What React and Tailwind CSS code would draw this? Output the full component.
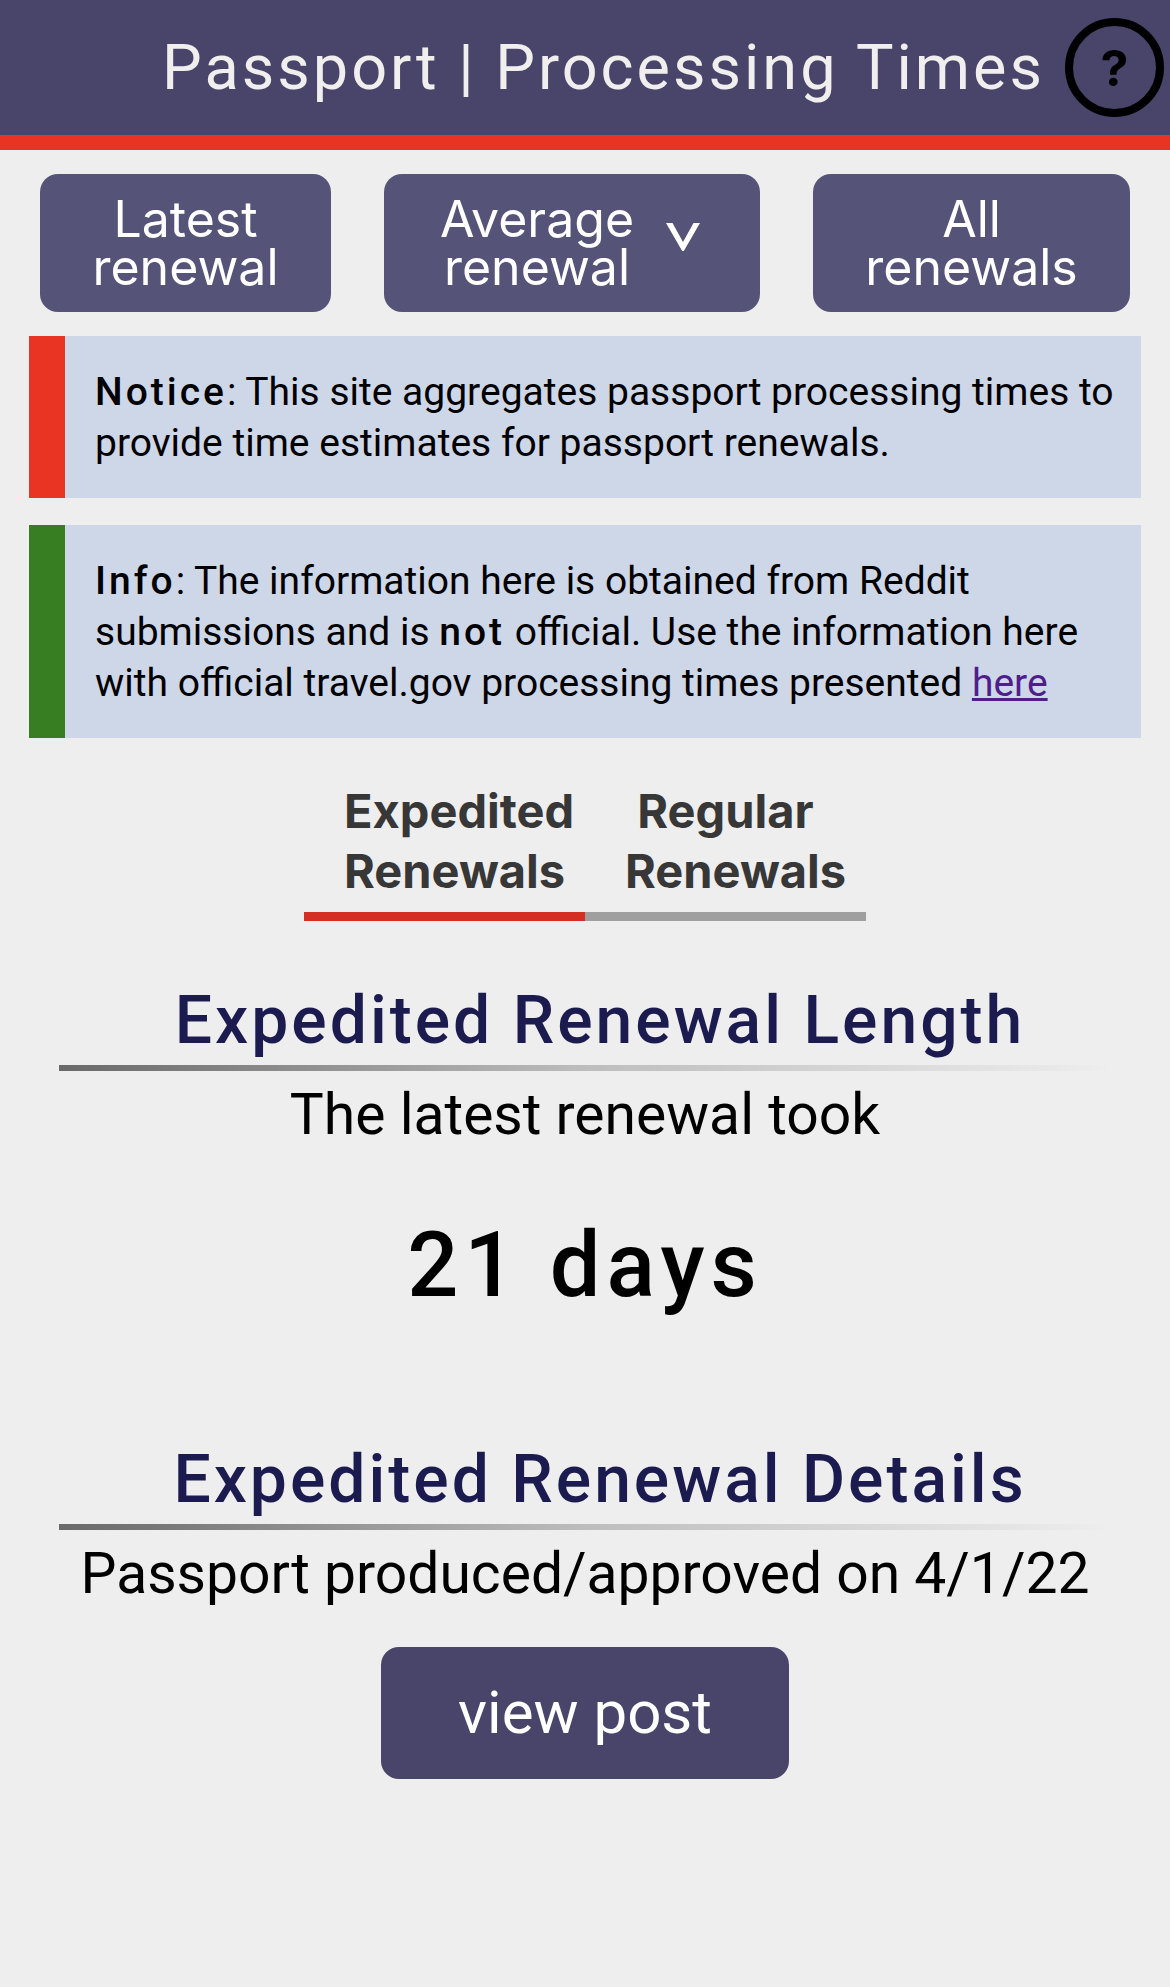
function NavButton({ children }) {
  return (
    <button
      type="button"
      className="flex h-[138px] items-center justify-center gap-8 rounded-[18px] bg-[#565378] font-['Inter',sans-serif] text-[50px] leading-[48px] text-white"
    >
      {children}
    </button>
  );
}

function Notice({ accent, children }) {
  return (
    <p className={`border-l-[36px] bg-[#ced7e8] pt-[31px] pr-4 pb-[29px] pl-[30px] text-[39px] leading-[51px] ${accent}`}>
      {children}
    </p>
  );
}

function Strong({ children }) {
  return <strong className="font-medium tracking-[3px]">{children}</strong>;
}

function Tab({ selected, children }) {
  return (
    <button
      type="button"
      role="tab"
      aria-selected={selected}
      className={`w-[281px] border-b-9 px-10 pt-3 pb-[11px] text-center font-['Inter',sans-serif] text-[47px] leading-[60px] font-bold text-[#373737] ${
        selected ? "border-[#d32f22]" : "border-[#9f9f9f]"
      }`}
    >
      {children}
    </button>
  );
}

function SectionHeading({ children }) {
  return (
    <>
      <h2 className="pl-[30px] text-center text-[66px] leading-[88px] font-medium tracking-[3px] text-[#1c1b4f]">
        {children}
      </h2>
      <div className="h-[6px] bg-linear-to-r from-[#696969] via-[#bdbdbd] to-[#eeeeee]" />
    </>
  );
}

export default function App() {
  return (
    <div className="min-h-screen bg-[#eeeeee] font-['Roboto',sans-serif] text-black">
      <header className="flex h-[150px] items-center justify-end gap-5 border-b-15 border-[#e93323] bg-[#48446a] pr-[6px]">
        <h1 className="text-[63px] leading-[80px] font-normal tracking-[3px] whitespace-nowrap text-[#f1eeee]">
          Passport | Processing Times
        </h1>
        <button
          type="button"
          aria-label="Help"
          className="flex size-[99px] shrink-0 items-center justify-center rounded-full border-8 border-black font-['Inter',sans-serif] text-[50px] leading-[60px] font-bold"
        >
          ?
        </button>
      </header>

      <nav className="grid grid-cols-[291fr_376fr_317fr] gap-[53px] px-10 pt-6">
        <NavButton>
          <span>
            Latest
            <br />
            renewal
          </span>
        </NavButton>
        <NavButton>
          <span>
            Average
            <br />
            renewal
          </span>
          <svg viewBox="0 0 34 28" className="mr-1 mb-3 h-[28px] w-[34px] shrink-0" fill="currentColor" aria-hidden="true">
            <path d="M0 0h6.500L17 19 27.500 0H34L17.800 28h-1.600z" />
          </svg>
        </NavButton>
        <NavButton>
          <span>
            All
            <br />
            renewals
          </span>
        </NavButton>
      </nav>

      <section className="flex flex-col gap-[27px] px-[29px] pt-6">
        <Notice accent="border-[#e93323]">
          <Strong>Notice</Strong>: This site aggregates passport processing times to provide time estimates for
          passport renewals.
        </Notice>
        <Notice accent="border-[#377e22]">
          <Strong>Info</Strong>: The information here is obtained from Reddit submissions and is{" "}
          <Strong>not</Strong> official. Use the information here with official travel.gov processing times
          presented{" "}
          <a href="#official" className="text-[#4f1d8c] underline">
            here
          </a>
        </Notice>
      </section>

      <div role="tablist" className="mt-[31px] flex justify-center">
        <Tab selected>Expedited Renewals</Tab>
        <Tab selected={false}>Regular Renewals</Tab>
      </div>

      <main className="px-[59px] pt-14 pb-16 text-center text-[57px] leading-[88px]">
        <section>
          <SectionHeading>Expedited Renewal Length</SectionHeading>
          <p>The latest renewal took</p>
          <p className="mt-[53px] text-[90px] leading-[108px] font-medium tracking-[6px]">21 days</p>
        </section>
        <section className="mt-[116px]">
          <SectionHeading>Expedited Renewal Details</SectionHeading>
          <p>Passport produced/approved on 4/1/22</p>
          <a
            href="#post"
            className="mt-[29px] inline-flex h-[132px] items-center rounded-[18px] bg-[#48446a] px-[77px] text-[60px] text-white"
          >
            view post
          </a>
        </section>
      </main>
    </div>
  );
}
